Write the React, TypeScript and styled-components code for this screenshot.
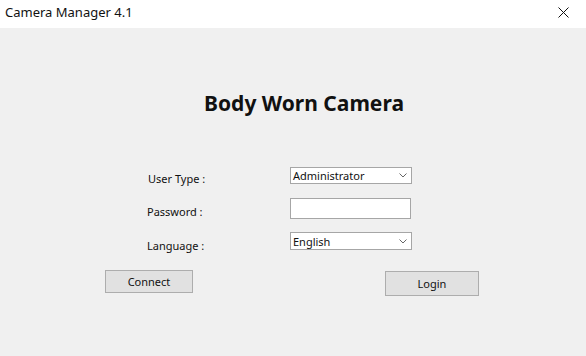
import styled, { createGlobalStyle } from 'styled-components';

const GlobalStyle = createGlobalStyle`
  html, body {
    margin: 0;
    padding: 0;
    width: 586px;
    height: 356px;
    overflow: hidden;
    background: #f0f0f0;
    font-family: "Noto Sans", "Open Sans", sans-serif;
  }
`;

const Window = styled.div`
  width: 586px;
  height: 356px;
  display: flex;
  flex-direction: column;
  background: #f0f0f0;
`;

const TitleBar = styled.div`
  height: 28px;
  background: #ffffff;
  display: flex;
  align-items: center;
  justify-content: space-between;
  padding-left: 5px;
  box-sizing: border-box;
`;

const TitleText = styled.span`
  font-size: 13px;
  color: #111;
  margin-top: -4px;
`;

const CloseBtn = styled.div`
  width: 46px;
  height: 28px;
  display: flex;
  align-items: center;
  justify-content: center;
  margin-top: -4px;
`;

const Body = styled.div`
  flex: 1;
  display: flex;
  flex-direction: column;
`;

const Heading = styled.h1`
  margin: 61px 0 0 0;
  text-align: center;
  padding-left: 22px;
  font-size: 21px;
  font-weight: 700;
  color: #111;
  line-height: 28px;
`;

const Form = styled.div`
  display: grid;
  grid-template-columns: 143px 124px;
  grid-auto-rows: 20px;
  row-gap: 13px;
  margin: 48px 0 0 147px;
  align-items: center;
`;

const Label = styled.label<{ $indent?: number; $drop: number }>`
  font-size: 11px;
  color: #111;
  padding-left: ${(p) => p.$indent ?? 0}px;
  margin-top: ${(p) => p.$drop}px;
`;

const Select = styled.div<{ $h: number }>`
  width: 122px;
  height: ${(p) => p.$h}px;
  box-sizing: border-box;
  border: 1px solid #a6a6a6;
  background: #fff;
  display: flex;
  align-items: center;
  justify-content: space-between;
  padding: 0 4px 0 2px;
  font-size: 11px;
  color: #111;
`;

const TextBox = styled.div`
  width: 121px;
  height: 21px;
  box-sizing: border-box;
  border: 1px solid #a6a6a6;
  background: #fff;
`;

const Buttons = styled.div`
  display: flex;
  align-items: flex-start;
  margin: 19px 0 0 105px;
`;

const Button = styled.div<{ $w: number; $h: number; $offset?: number }>`
  width: ${(p) => p.$w}px;
  height: ${(p) => p.$h}px;
  box-sizing: border-box;
  border: 1px solid #adadad;
  background: #e1e1e1;
  display: flex;
  align-items: center;
  justify-content: center;
  font-size: 11px;
  color: #111;
  margin-left: ${(p) => p.$offset ?? 0}px;
  margin-top: ${(p) => (p.$offset ? 1 : 0)}px;
`;

const Chevron = () => (
  <svg width="8" height="5" viewBox="0 0 8 5">
    <path d="M0.5 0.5 L4 4 L7.5 0.5" fill="none" stroke="#555" strokeWidth="0.9" />
  </svg>
);

export default function App() {
  return (
    <>
      <GlobalStyle />
      <Window>
        <TitleBar>
          <TitleText>Camera Manager 4.1</TitleText>
          <CloseBtn>
            <svg width="11" height="11" viewBox="0 0 11 11">
              <path d="M0.5 0.5 L10.5 10.5 M10.5 0.5 L0.5 10.5" stroke="#111" strokeWidth="1" />
            </svg>
          </CloseBtn>
        </TitleBar>
        <Body>
          <Heading>Body Worn Camera</Heading>
          <Form>
            <Label $indent={1} $drop={7}>User Type :</Label>
            <Select $h={17}>
              <span>Administrator</span>
              <Chevron />
            </Select>
            <Label $drop={7}>Password :</Label>
            <TextBox />
            <Label $drop={8}>Language :</Label>
            <Select $h={18}>
              <span>English</span>
              <Chevron />
            </Select>
          </Form>
          <Buttons>
            <Button $w={88} $h={23}>Connect</Button>
            <Button $w={94} $h={25} $offset={192}>Login</Button>
          </Buttons>
        </Body>
      </Window>
    </>
  );
}
